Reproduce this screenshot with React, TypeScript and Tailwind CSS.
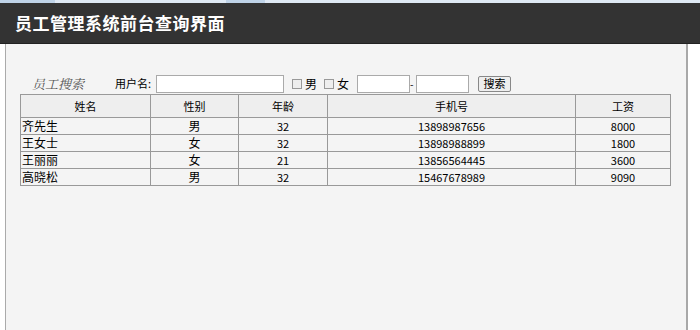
import React from "react";

const rows = [
  ["齐先生", "男", "32", "13898987656", "8000"],
  ["王女士", "女", "32", "13898988899", "1800"],
  ["王丽丽", "女", "21", "13856564445", "3600"],
  ["高晓松", "男", "32", "15467678989", "9090"],
];

export default function App() {
  return (
    <div className="w-[700px] h-[330px] bg-white flex flex-col overflow-hidden" style={{ fontFamily: '"Noto Sans CJK SC", "Liberation Sans", sans-serif' }}>
      <div className="h-[3px] bg-[#dfe9f4] flex">
        <div className="w-[55px] bg-[#bfd3e8]" />
        <div className="w-[171px]" />
        <div className="w-[39px] bg-[#bfd3e8]" />
      </div>
      <div className="h-[41px] bg-[#333333] border-b border-[#222] flex items-center pl-[15px]">
        <span className="text-white font-bold text-[17px] tracking-[0.5px]">员工管理系统前台查询界面</span>
      </div>
      <div className="flex-1 ml-[5px] w-[683px] bg-[#f4f4f4] border-l border-[#aaa] border-r-2 border-r-[#a8a8a8] flex flex-col pt-[30px] pl-[14px]">
        <div className="flex items-center h-[19px] text-[11px] text-black">
          <span className="ml-[12px] italic text-[#555] text-[13px] w-[83px] whitespace-nowrap" style={{ fontFamily: '"Noto Serif CJK SC", "Noto Sans CJK SC", serif' }}>员工搜索</span>
          <span className="whitespace-nowrap">用户名:</span>
          <input className="ml-[5px] w-[128px] h-[18px] bg-white border border-[#aaa]" />
          <span className="ml-[8px] w-[10px] h-[10px] border border-[#999] bg-[#eee]" />
          <span className="ml-[3px] text-[12px]">男</span>
          <span className="ml-[7px] w-[10px] h-[10px] border border-[#999] bg-[#eee]" />
          <span className="ml-[3px] text-[12px]">女</span>
          <input className="ml-[8px] w-[53px] h-[18px] bg-white border border-[#aaa]" />
          <span className="w-[6px] text-[10px]">-</span>
          <input className="w-[53px] h-[18px] bg-white border border-[#aaa]" />
          <button className="ml-[9px] w-[33px] h-[16px] bg-[#eee] border border-[#888] rounded-[2px] text-[11px] leading-none">搜索</button>
        </div>
        <table className="mt-[1px] w-[651px] border-collapse text-[11px] text-black">
          <thead>
            <tr className="h-[23px] bg-[#eeeeee]">
              <th className="w-[130px] border border-[#999] font-normal">姓名</th>
              <th className="w-[88px] border border-[#999] font-normal">性别</th>
              <th className="w-[89px] border border-[#999] font-normal">年龄</th>
              <th className="w-[248px] border border-[#999] font-normal">手机号</th>
              <th className="border border-[#999] font-normal">工资</th>
            </tr>
          </thead>
          <tbody>
            {rows.map((r, i) => (
              <tr key={i} className="h-[17px]">
                <td className="border border-[#999] px-[1px] leading-none text-[12px]">{r[0]}</td>
                <td className="border border-[#999] text-center leading-none text-[12px]">{r[1]}</td>
                <td className="border border-[#999] text-center leading-none">{r[2]}</td>
                <td className="border border-[#999] text-center leading-none">{r[3]}</td>
                <td className="border border-[#999] text-center leading-none">{r[4]}</td>
              </tr>
            ))}
          </tbody>
        </table>
      </div>
    </div>
  );
}
